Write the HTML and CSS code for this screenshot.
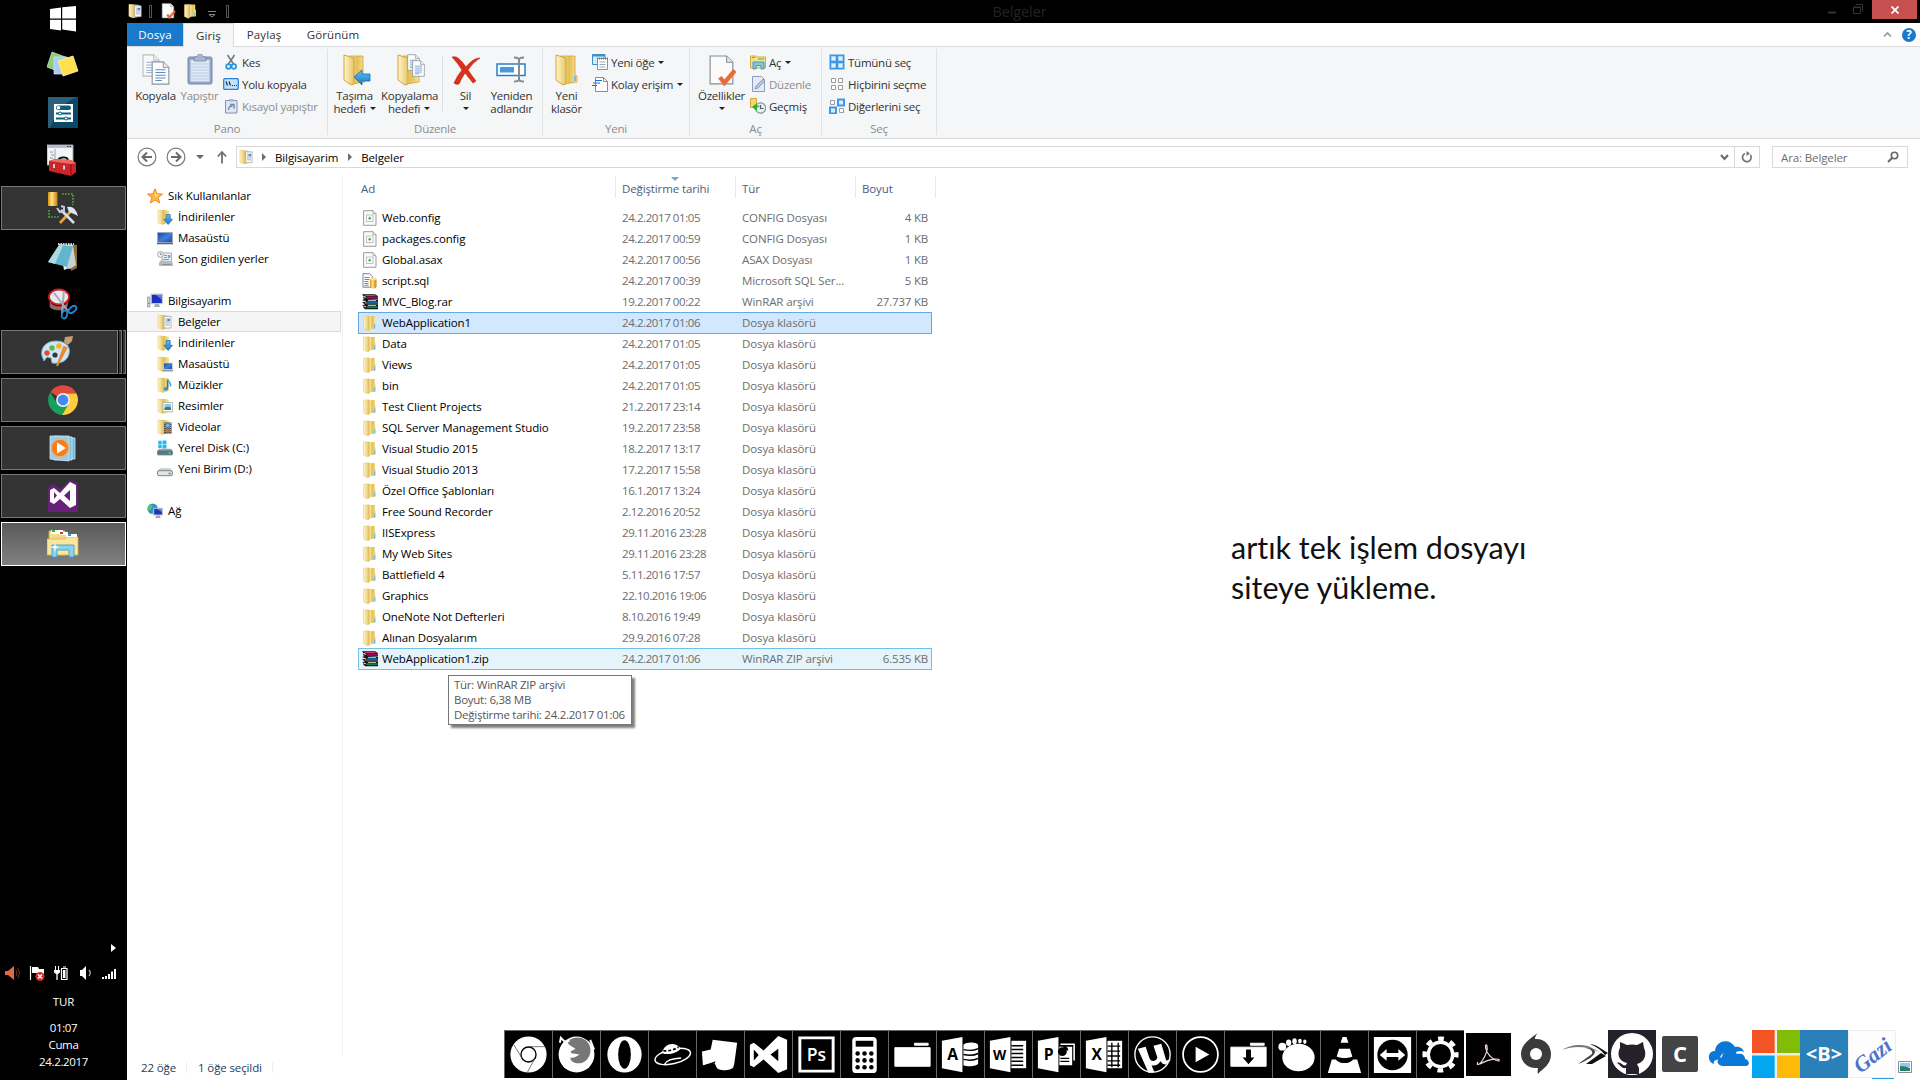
FILE: index.html
```html
<!DOCTYPE html>
<html lang="tr">
<head>
<meta charset="utf-8">
<title>Belgeler</title>
<link rel="stylesheet" href="styles.css">
</head>
<body>
<svg class="defs" aria-hidden="true">
  <defs>
    <linearGradient id="gFold" x1="0" x2="1"><stop offset="0" stop-color="#fdf3bd"/><stop offset=".5" stop-color="#e3bf55"/><stop offset="1" stop-color="#f8e59c"/></linearGradient>
    <linearGradient id="gFront" x1="0" x2="1"><stop offset="0" stop-color="#fff6cd"/><stop offset="1" stop-color="#e6c566"/></linearGradient>
    <linearGradient id="gBlue" x1="0" y1="0" x2="0" y2="1"><stop offset="0" stop-color="#5cc4f5"/><stop offset="1" stop-color="#1679c4"/></linearGradient>
    <linearGradient id="gScreen" x1="0" y1="0" x2="1" y2="1"><stop offset="0" stop-color="#123f9a"/><stop offset=".5" stop-color="#3f7fdc"/><stop offset="1" stop-color="#164aa6"/></linearGradient>
    <linearGradient id="gDb" x1="0" x2="1"><stop offset="0" stop-color="#d8920f"/><stop offset=".4" stop-color="#ffe28a"/><stop offset="1" stop-color="#c67c08"/></linearGradient>
  </defs>
  <symbol id="folder" viewBox="0 0 16 16"><path d="M7 1h6v5l.8 1v6.500L7 14.500z" fill="url(#gFold)"/><path d="M1.5 1.200L7 .8v14.400l-1.600.6-3.900-2z" fill="url(#gFront)" stroke="#e1c369" stroke-width=".5"/><path d="M7 1v14.300" stroke="#d9b85a" stroke-width=".8"/><path d="M12.600 9.500v4" stroke="#5eb7ea" stroke-width="1.100"/></symbol>
  <symbol id="folderback" viewBox="0 0 16 16"><path d="M1 1h6l5 .5V14l-6 1.500-5-2z" fill="url(#gFold)"/><path d="M1 1l5 .3V15.600L1 13.600z" fill="url(#gFront)" stroke="#e1c369" stroke-width=".5"/></symbol>
  <symbol id="docs" viewBox="0 0 16 16"><use href="#folderback"/><path d="M7 2.500h7v11.500H7z" fill="#fafafa" stroke="#a8a8a8" stroke-width=".8"/><path d="M8.300 5h2M8.300 7h2M8.300 9h4.500M8.300 11h4.500" stroke="#9a9a9a" stroke-width=".8"/><rect x="10.300" y="4.600" width="2.600" height="2.800" fill="#2d8fe0"/></symbol>
  <symbol id="downloads" viewBox="0 0 16 16"><use href="#folderback"/><path d="M9.200 5.500h4v4.800h2.300L11.200 15.400 6.900 10.300h2.300z" fill="url(#gBlue)" stroke="#1a62a8" stroke-width=".7"/></symbol>
  <symbol id="deskfolder" viewBox="0 0 16 16"><use href="#folderback"/><rect x="6.500" y="7" width="9" height="6.600" fill="url(#gScreen)" stroke="#d8dde2" stroke-width=".7"/><path d="M6 14.800h10" stroke="#768596" stroke-width="1.200"/></symbol>
  <symbol id="music" viewBox="0 0 16 16"><use href="#folderback"/><path d="M10.600 2.500v8.700" stroke="#1b79c8" stroke-width="1.500"/><path d="M10.600 2.500c.8 2.400 4 3 2.800 7" fill="none" stroke="#3ba4ea" stroke-width="1.500"/><ellipse cx="9" cy="11.800" rx="2.300" ry="1.900" fill="#2f92da"/></symbol>
  <symbol id="pictures" viewBox="0 0 16 16"><use href="#folderback"/><rect x="6" y="4.400" width="9.300" height="9.500" fill="#fff" stroke="#a5a9ad" stroke-width=".8"/><rect x="7.400" y="6" width="6.600" height="6" fill="#88cbed"/><path d="M7.400 10c3-2 4-1 6.600-.5V12H7.400z" fill="#477b6d"/></symbol>
  <symbol id="videos" viewBox="0 0 16 16"><use href="#folderback"/><rect x="7" y="3.500" width="7.600" height="11" fill="#4b545e"/><path d="M8 4v10M13.700 4v10" stroke="#e4e8ec" stroke-width=".8" stroke-dasharray="1 1"/><rect x="9" y="4.500" width="3.700" height="4" fill="#67aee8"/><rect x="9" y="9.500" width="3.700" height="4" fill="#b9793b"/></symbol>
  <symbol id="desktop" viewBox="0 0 16 16"><rect x=".6" y="2.600" width="14.800" height="10" fill="url(#gScreen)" stroke="#9aa6b4" stroke-width=".9"/><path d="M0 13.600h16" stroke="#5c6b7d" stroke-width="1.400"/></symbol>
  <symbol id="recent" viewBox="0 0 16 16"><path d="M5 2h9.500v9.500H5z" fill="#eceff1" stroke="#9b9fa3" stroke-width=".8"/><path d="M7 4.500h3M7 6.500h3M6 8.500h6" stroke="#7ca0c4"/><rect x="10.800" y="4" width="2.500" height="3" fill="#5ea9e0"/><path d="M2 12l1-2.300h10L16 12v3H2z" fill="#b7bbbf"/><path d="M5 13.500h9" stroke="#8b8f93"/><circle cx="3.400" cy="3.400" r="2.900" fill="#f5f7f8" stroke="#8e959b" stroke-width=".8"/><path d="M3.400 1.700v1.900H5" stroke="#666" fill="none" stroke-width=".7"/></symbol>
  <symbol id="star" viewBox="0 0 16 16"><path d="M8 .8l2 5 5.500.3-4.300 3.500 1.500 5.400L8 12l-4.700 3 1.500-5.400L.5 6.100 6 5.800z" fill="#ffb83f" stroke="#e5831a" stroke-width=".9"/><path d="M8 3l1.200 3.500 3.500.3L8 9z" fill="#ffe29a"/></symbol>
  <symbol id="computer" viewBox="0 0 16 16"><rect x="4.200" y="1.200" width="11.200" height="9.400" fill="#1b2ec0" stroke="#c2c6cf" stroke-width="1.200"/><path d="M9 2h6v5z" fill="#5c7df0"/><path d="M8 11h4l1 3H7z" fill="#a9aeb8"/><rect x=".4" y="4" width="2.600" height="10" fill="#c9ced2" stroke="#8b9096" stroke-width=".6"/><path d="M1 10.500h1.300" stroke="#3da54a"/></symbol>
  <symbol id="diskc" viewBox="0 0 16 16"><path d="M1.300.8h3.400v3.600H1.300zM5.500.4h4v4h-4zM1.300 5.100h3.400v3H1.300zM5.500 5.100h4v3.300h-4z" fill="#1bbcf2"/><path d="M2 8.800h12l1.600 2v4.400H.4v-4.400z" fill="#9aa3aa"/><rect x=".6" y="10.800" width="14.800" height="4" rx="1" fill="#4f7b90" stroke="#70777d" stroke-width=".7"/><path d="M11.500 13h2" stroke="#57dc62" stroke-width="1.400"/></symbol>
  <symbol id="diskd" viewBox="0 0 16 16"><path d="M3 7h10l2.600 3v4.500H.4V10z" fill="#d0d2d5"/><rect x=".6" y="9.700" width="14.800" height="5" rx="1.400" fill="#e4e5e8" stroke="#75797e" stroke-width=".9"/><path d="M11.500 12.500h2.200" stroke="#3fa34a" stroke-width="1.500"/></symbol>
  <symbol id="network" viewBox="0 0 16 16"><circle cx="5.600" cy="5.800" r="5.200" fill="#2f8fd5"/><path d="M3 1.600c3 0 3 2 1.600 3.600S2 8 1 7.400 1 3 3 1.600zM6 7c2-1 3 1 2 3.600H5z" fill="#5cc06a"/><rect x="6.700" y="5.300" width="8.700" height="6.700" fill="#1a35be" stroke="#c0c7d0" stroke-width="1"/><path d="M10 6h5v3z" fill="#6487f0"/><path d="M9.500 12.500h3l1.500 2.500h-6z" fill="#a1a7af"/></symbol>
  <symbol id="config" viewBox="0 0 16 16"><path d="M1.600.7h9.400l3 3v11.600H1.600z" fill="#fbfbfb" stroke="#919191" stroke-width=".9"/><path d="M11 .7v3h3" fill="#e5e5e5" stroke="#919191" stroke-width=".7"/><rect x="4.500" y="5" width="6.500" height="6.500" fill="#fff" stroke="#b5b5b5" stroke-width=".8"/><path d="M7.700 6.800v3M6.200 8.300h3" stroke="#35a43e" stroke-width="1.100"/></symbol>
  <symbol id="sql" viewBox="0 0 16 16"><path d="M1 .7h6.500l3 3v10.500H1z" fill="#fff" stroke="#60779b" stroke-width=".9"/><path d="M2.500 4.500h5M2.500 6.500h5M2.500 8.500h4M2.500 10.500h4M2.500 12.300h4" stroke="#62758f" stroke-width=".9"/><rect x="8" y="5" width="6.500" height="10.500" rx="2.500" fill="url(#gDb)"/><ellipse cx="11.200" cy="6" rx="3.200" ry="1.400" fill="#ffe08a"/></symbol>
  <symbol id="rar" viewBox="0 0 16 16"><path d="M0 .3h13l2.800 1.800v3L4 5.400zM3 5.500h13v4.300H4zM3 10.300h13v5H3L1 13z" fill="#111"/><path d="M2 .9h10.500l2.200 1.300H4.500z" fill="#d43a7c"/><path d="M4.500 2.700h10.700v2H4.500z" fill="#9e0c5c"/><path d="M4.800 7.100h10.900v2H4.800z" fill="#1260ae"/><path d="M4.800 12.200h10.900v2H4.800z" fill="#0b7d58"/><path d="M1 3.500l3 1.600-2.600 1 3 1.700-3 .9 3 1.800-3 1 3.200 2" stroke="#111" stroke-width="1.100" fill="none"/><path d="M2 2.300l2 1.200M1.500 7l2.800 1.200M1.500 12l2.800 1" stroke="#f2f2e8" stroke-width=".9"/><path d="M6 6.500h8M6 11.500h8" stroke="#d8e5c0" stroke-width=".8"/></symbol>
  <symbol id="bigfolder" viewBox="0 0 32 32"><path d="M10 2h14v19l2 1v6l-13 2z" fill="url(#gFold)" stroke="#d3a23c" stroke-width=".8"/><path d="M5 1l10 3v26l-3 1-7-5z" fill="url(#gFront)" stroke="#d3a23c" stroke-width="1"/></symbol>
  <symbol id="page" viewBox="0 0 20 26"><path d="M1 1h12l6 6v18H1z" fill="#fcfcfd" stroke="#8e959c" stroke-width="1.200"/><path d="M13 1v6h6" fill="#e6e8ea" stroke="#8e959c"/><path d="M4.500 9.500h11M4.500 12.500h11M4.500 15.500h11M4.500 18.500h11M4.500 21h7" stroke="#5b8bc4" stroke-width="1.100"/></symbol>
  <symbol id="check" viewBox="0 0 26 30"><path d="M1 1h16l6 6v21H1z" fill="#fbfbfc" stroke="#878c92" stroke-width="1.100"/><path d="M17 1v6h6" fill="#e5e6e8" stroke="#878c92"/><path d="M10.500 21.500l4.300 5.500L25 15" stroke="#ea6a35" stroke-width="4.200" fill="none"/></symbol>
</svg>

<div class="screen">
  <aside class="taskbar">
    <div class="start"><svg width="26" height="26" viewBox="0 0 26 26"><path d="M0 3l11-1.500v11H0zM12.200 1.300L26 0v12.500H12.200zM0 13.700h11v10.800L0 23zM12.200 13.700H26V25.500l-13.800-2z" fill="#fff"/></svg></div>
    <div class="task"><svg width="32" height="32" viewBox="0 0 32 32"><path d="M5 4l16 6-5 15L0 19z" fill="#8bcf7c" stroke="#cdeebf" stroke-width=".7"/><path d="M7 9h13v17H7z" fill="#a5cdf5" stroke="#d7e8fb" stroke-width=".7"/><path d="M11 13l15-5 5 15-15 5z" fill="#ffe14f" stroke="#fff2a0" stroke-width=".8"/></svg></div>
    <div class="task"><svg width="30" height="31" viewBox="0 0 30 31"><path d="M0 0h30v31H0z" fill="#0b4766"/><path d="M0 0h30Q10 6 2 31H0z" fill="#2d5f7a"/><path d="M6 7h19v18H6z" fill="#fff"/><rect x="8" y="8.500" width="15" height="4.500" rx="2.200" fill="#0b5d7c"/><circle cx="10.500" cy="10.700" r="1.800" fill="#fff"/><path d="M8 16.500h15M8 21.500h15" stroke="#0b5d7c" stroke-width="1.800"/><circle cx="12" cy="16.500" r="1.500" fill="#fff" stroke="#0b5d7c"/><circle cx="18" cy="21.500" r="1.500" fill="#fff" stroke="#0b5d7c"/></svg></div>
    <div class="task"><svg width="32" height="32" viewBox="0 0 32 32"><path d="M0 1h26v20H0z" fill="#f3f5f7" stroke="#9aa2ab"/><path d="M0 1h26v3H0z" fill="#b4bfcb"/><path d="M20 2.500h1.500M22.500 2.500H24" stroke="#234"/><path d="M8 5v16" stroke="#9aa2ab"/><path d="M3 8h3M4 11h3M3 14h3M4 17h3" stroke="#8a929b"/><path d="M11 17c0-4 9-5 10-1" fill="none" stroke="#111" stroke-width="1.800"/><path d="M2 17l6-2 16 1 5 3v9l-5 4-22-5z" fill="#c9252b"/><path d="M2 17l22 3 5-1-5-3-16-1z" fill="#ee6a65"/><path d="M24 20v12" stroke="#8c0d12"/><path d="M7 20v4M17 21.500v4" stroke="#ddd" stroke-width="1.800"/></svg></div>
    <div class="task open"><svg width="32" height="34" viewBox="0 0 32 34"><rect x="1" y="1" width="9.500" height="14" rx="1" fill="url(#gDb)"/><path d="M15 3h11v11" fill="none" stroke="#4caf42" stroke-width="1.600" stroke-dasharray="1.700 1.300"/><path d="M2 19v7h11" fill="none" stroke="#4caf42" stroke-width="1.600" stroke-dasharray="1.700 1.300"/><path d="M13 32L24 20" stroke="#e9a62e" stroke-width="2.600"/><path d="M14 19l13 13" stroke="#d4dced" stroke-width="2.600"/><path d="M10 17l3 4 4-1 0-4-3-1" fill="none" stroke="#c0cbe0" stroke-width="2"/><path d="M20 16q8-2 11 9l-4-2-5-2z" fill="#dce6f5"/></svg></div>
    <div class="task"><svg width="32" height="32" viewBox="0 0 32 32"><path d="M22 4l8 1v23l-6 3z" fill="#8d6b33"/><path d="M12 4l14 1-4 23-5 2z" fill="#e8eef0"/><path d="M26 5l3 20-6 4-4-1z" fill="#c8d1d3"/><path d="M12 5l14 1-6 21-19-5z" fill="#62b6cb"/><path d="M12 5l4 .500L8 24l-7-2z" fill="#a9dbe3"/><path d="M11 4h16" stroke="#c8d1d6" stroke-width="2.200" stroke-dasharray="1.500 1"/></svg></div>
    <div class="task"><svg width="32" height="32" viewBox="0 0 32 32"><ellipse cx="12" cy="9" rx="10" ry="7.500" fill="#e9e9f1" stroke="#d11e1e" stroke-width="1.800"/><path d="M3 14c3 6 15 6 18 0l-1 5c-3 4-14 4-17 0z" fill="#737880" stroke="#c33" stroke-width=".8"/><path d="M7 5l14 18M17 3l-2 22" stroke="#a3a9b2" stroke-width="2"/><ellipse cx="17.500" cy="26.500" rx="2.600" ry="4" transform="rotate(15 17.500 26.500)" fill="none" stroke="#2487d0" stroke-width="1.800"/><ellipse cx="25.500" cy="21.500" rx="2.600" ry="4.500" transform="rotate(50 25.500 21.500)" fill="none" stroke="#2487d0" stroke-width="1.800"/></svg></div>
    <div class="taskrow"><div class="task open multi"><svg width="32" height="32" viewBox="0 0 32 32"><path d="M1 20C-1 11 6 5 15 5c10 0 15 6 13 13-2 8-10 10-17 9l-1-5-4-1-3 4z" fill="#cfe6f5" stroke="#6fb0d8" stroke-width="1"/><circle cx="14" cy="19" r="2.600" fill="#2d3a45"/><circle cx="6" cy="17" r="2.700" fill="#e2493b"/><circle cx="11" cy="12" r="2.700" fill="#5fba46"/><circle cx="18" cy="10" r="2.800" fill="#f3b32a"/><path d="M16 30l7-19 2.500 1z" stroke="#e7892c" fill="#f4a03b" stroke-width="1.800"/><path d="M24 1l8-1-1 5-4 4-4-3z" fill="#c99e6d"/></svg></div><i class="stack"></i><i class="stack"></i></div>
    <div class="task open"><svg width="30" height="30" viewBox="0 0 30 30"><path d="M15 15L2.500 7A15 15 0 0 1 28.500 8.500H15z" fill="#dd4b3e"/><path d="M15 15l6 3-6.500 12A15 15 0 0 1 2.300 7.200L9 18z" fill="#16a05b"/><path d="M15 8.500h13.500A15 15 0 0 1 14.200 30L21 18z" fill="#ffcd40"/><circle cx="15" cy="15" r="6.900" fill="#f4f4f4"/><circle cx="15" cy="15" r="5.400" fill="#4688f1"/></svg></div>
    <div class="task open"><svg class="media" width="28" height="28" viewBox="0 0 28 28"><path d="M8 3l18 1v21l-18 0z" fill="#73b5d8" stroke="#c4e6f6" stroke-width=".8"/><path d="M5 2l18 1v23L5 26z" fill="#7fbfe0" stroke="#d1edf9" stroke-width=".8"/><path d="M1 2h19v25L1 25z" fill="#9ccbe3" stroke="#cfeaf6" stroke-width=".8"/><circle cx="11" cy="14" r="8.700" fill="#f47f1f" stroke="#fbb06a" stroke-width="1"/><path d="M8 8.500v11l9-5.500z" fill="#fff"/></svg></div>
    <div class="task open"><svg width="30" height="32" viewBox="0 0 30 32"><path d="M0 8l4-4 9 5L22 0l8 3v29H0z" fill="#68217a"/><path d="M22 2l6 3v20l-6 3-10-9-6 5-4-2V10l4-2 6 5zm0 8l-6 5.500 6 5.500zM6 12v7l3-3.500z" fill="#fff"/></svg></div>
    <div class="task open active"><svg width="32" height="32" viewBox="0 0 32 32"><path d="M2 3h16v24H2z" fill="#f3dc83" stroke="#cfae4b" stroke-width=".8"/><path d="M4 2h12v4H4z" fill="#fff"/><path d="M5 3h3" stroke="#2db23a" stroke-width="2"/><path d="M10 6h20v8H10z" fill="#f0d77b"/><path d="M12 4h9v3h-9z" fill="#fff"/><path d="M13 5h3" stroke="#d0402f" stroke-width="2"/><path d="M0 11h18l2-2h11v18H0z" fill="#f8e79d" stroke="#d5b450" stroke-width=".8"/><path d="M19 6h11v3H19z" fill="#fff"/><path d="M21 7h3" stroke="#3499d8" stroke-width="2"/><path d="M5 29V17h22v12h-5v-7H10v7z" fill="#8bd3ee" stroke="#3f9ecb" stroke-width=".9"/><path d="M8 13l.7 5 4.300 1-4.300 1-.7 5-.7-5-4.300-1 4.300-1z" fill="#fff"/></svg></div>

    <div class="tray">
      <svg class="expand" width="5" height="8" viewBox="0 0 5 8"><path d="M0 0l5 4-5 4z" fill="#fff"/></svg>
      <div class="trayicons">
        <svg width="16" height="16" viewBox="0 0 16 16"><path d="M0 6h3l6-5v14l-6-5H0z" fill="#e06a48"/><path d="M11 5q2 3 0 6M13 3q3 5 0 10" fill="none" stroke="#6e2d1d"/></svg>
        <svg width="16" height="16" viewBox="0 0 16 16"><path d="M1.500 1v14" stroke="#fff" stroke-width="1.200"/><path d="M3 2h6l1 2h5v5H9L8 8H3z" fill="#fff"/><circle cx="11" cy="11.500" r="4.500" fill="#d32c24"/><path d="M9 9.500l4 4M13 9.500l-4 4" stroke="#fff" stroke-width="1.500"/></svg>
        <svg width="16" height="16" viewBox="0 0 16 16"><path d="M2.500 1v4M5.500 1v4" stroke="#fff"/><path d="M1 5h6v2.500L5 9H3L1 7.500z" fill="#fff"/><path d="M4 8.500V15" stroke="#fff" stroke-width="1.300"/><path d="M8.500 3.500h5.500v11H8.500zM10 2h3" fill="none" stroke="#fff" stroke-width="1.200"/><path d="M10 5h2.500v8H10z" fill="#fff"/></svg>
        <svg width="16" height="16" viewBox="0 0 16 16"><path d="M3 5h2l4-4v14l-4-4H3z" fill="#fff"/><path d="M12 5q2.500 3 0 6" fill="none" stroke="#bbb" stroke-width="1.200"/></svg>
        <svg width="16" height="16" viewBox="0 0 16 16"><path d="M1 12h2v2H1zM4 11h2v3H4zM7 9h2v5H7zM10 6.500h2V14h-2zM13 4h2v10h-2z" fill="#fff"/></svg>
      </div>
      <div class="lang">TUR</div>
      <div class="clock">01:07<br>Cuma<br>24.2.2017</div>
    </div>
  </aside>

  <main class="window">
    <header class="titlebar">
      <div class="quick">
        <svg width="15" height="16"><use href="#docs"/></svg><i class="grip"></i>
        <svg class="q2" width="15" height="16"><use href="#check"/></svg>
        <svg class="q3" width="15" height="16"><use href="#folder"/></svg>
        <svg class="q4" width="8" height="7" viewBox="0 0 8 7"><path d="M0 .500h8M1 3.500h6L4 6z" stroke="#888" fill="none"/></svg><i class="grip"></i>
      </div>
      <div class="title">Belgeler</div>
      <div class="winbtns">
        <svg width="8" height="10" viewBox="0 0 8 10"><path d="M0 8.500h8" stroke="#333" stroke-width="2"/></svg>
        <svg width="10" height="10" viewBox="0 0 10 10"><path d="M.500 3.500h7v6h-7zM0 3h8M2.500.500h7v7" fill="none" stroke="#333"/></svg>
        <span class="close"><svg width="8" height="8" viewBox="0 0 8 8"><path d="M.500.500l7 7M7.500.500l-7 7" stroke="#fff" stroke-width="1.700"/></svg></span>
      </div>
    </header>
    <nav class="tabs">
      <span class="tab file">Dosya</span><span class="tab current">Giriş</span><span class="tab share">Paylaş</span><span class="tab view">Görünüm</span>
      <svg class="caret" width="9" height="7" viewBox="0 0 9 7"><path d="M1 5.500L4.500 2 8 5.500" fill="none" stroke="#999" stroke-width="1.700"/></svg>
      <span class="help">?</span>
    </nav>
    <section class="ribbon">
      <div class="group g1">
        <div class="tools">
          <div class="big w40"><svg width="32" height="32" viewBox="0 0 32 32"><use href="#page" x="2" y="0" width="18" height="23" opacity=".6"/><use href="#page" x="11" y="7" width="19" height="24"/></svg>Kopyala</div>
          <div class="big w46 off"><svg width="32" height="32" viewBox="0 0 32 32"><rect x="4" y="3" width="24" height="27" rx="1.500" fill="#93a3c4" stroke="#7488b2"/><path d="M6.500 6h19v21.500h-19z" fill="#dfe8f7"/><path d="M7 10h18M7 13h18M7 16h18M7 19h18M7 22h18M7 25h18" stroke="#bccce6"/><path d="M10 7V3h3c0-4 6-4 6 0h3v4z" fill="#aab7cf" stroke="#7488b2" stroke-width=".8"/></svg>Yapıştır</div>
          <div class="smalls">
            <span><svg width="16" height="16" viewBox="0 0 16 16"><path d="M4.500 1l6 9M11.500 1l-6 9" stroke="#6d7682" stroke-width="1.500"/><circle cx="5.500" cy="12.500" r="2.300" fill="none" stroke="#2695dd" stroke-width="1.700"/><circle cx="10.800" cy="12.500" r="2.300" fill="none" stroke="#2695dd" stroke-width="1.700"/></svg>Kes</span>
            <span><svg width="16" height="16" viewBox="0 0 16 16"><rect x=".700" y="2.700" width="14.600" height="10.600" rx="1" fill="#c6e2fb" stroke="#2b7fdc" stroke-width="1.300"/><path d="M3 5.500l1.500 4M6 5.500l1.500 4M9 9.500h1M11 9.500h1M13 9.500h1" stroke="#1c2b45" stroke-width="1.200"/></svg>Yolu kopyala</span>
            <span class="off"><svg width="16" height="16" viewBox="0 0 16 16"><path d="M2.500 2.500h11.500v12.500H2.500z" fill="#dfe6f1" stroke="#8292b3"/><path d="M6 1h4.500v2.500H6z" fill="#a8b4cb"/><path d="M5.500 12c0-3 1-4 4-4M7 6.500h4v4" fill="none" stroke="#7386ae" stroke-width="1.400"/></svg>Kısayol yapıştır</span>
          </div>
        </div><div class="label">Pano</div>
      </div>
      <div class="group g2">
        <div class="tools">
          <div class="big w52"><svg width="32" height="32" viewBox="0 0 32 32"><use href="#bigfolder"/><path d="M15 23l8-7v4h8v7h-8v4z" fill="url(#gBlue)" stroke="#1669b1" stroke-width=".8"/></svg>Taşıma<br>hedefi <b class="dd"></b></div>
          <div class="big w56"><svg width="32" height="32" viewBox="0 0 32 32"><use href="#bigfolder"/><use href="#page" x="14" y="0" width="13" height="17"/><use href="#page" x="19" y="6" width="13" height="17"/></svg>Kopyalama<br>hedefi <b class="dd"></b></div>
          <i class="subsep"></i>
          <div class="big del"><svg width="32" height="32" viewBox="0 0 32 32"><path d="M2 3q3-1 6 1 4 3 8 9 7-9 14-9-7 4-12 12 4 6 8 11l-3 2q-4-5-8-10-4 6-6 11-3 1-5-1 3-7 8-13Q7 8 2 3z" fill="#dc3018" stroke="#b3200e" stroke-width=".6"/></svg>Sil<br><b class="dd"></b></div>
          <div class="big w46"><svg width="32" height="32" viewBox="0 0 32 32"><rect x="1" y="10" width="28" height="11.500" fill="#fff" stroke="#277fca" stroke-width="1.500"/><rect x="4" y="13" width="14" height="5.500" fill="#4a98dd"/><path d="M18 3.500q5 0 5 2.500v19q0 2.500-5 2.500M28 3.500q-5 0-5 2.500v19q0 2.500 5 2.500" fill="none" stroke="#868b90" stroke-width="2"/></svg>Yeniden<br>adlandır</div>
        </div><div class="label">Düzenle</div>
      </div>
      <div class="group g3">
        <div class="tools">
          <div class="big w46"><svg width="32" height="32" viewBox="0 0 32 32"><use href="#bigfolder"/><path d="M24 22v5" stroke="#6ec2f2" stroke-width="2"/></svg>Yeni<br>klasör</div>
          <div class="smalls">
            <span><svg width="16" height="16" viewBox="0 0 16 16"><path d="M.500.500h12.500v10H.500z" fill="#d7ecfa" stroke="#3c8ecb"/><path d="M.500 1.500h12.500" stroke="#3c8ecb" stroke-width="2"/><path d="M5.500 4.500h10v11h-10z" fill="#fff" stroke="#8b9097"/><path d="M5 4.500h11" stroke="#777" stroke-width="2" stroke-dasharray="1 1"/><path d="M7.500 8h6M7.500 10.500h6M7.500 13h6" stroke="#a3a8ae"/></svg>Yeni öğe <b class="dd"></b></span>
            <span><svg width="16" height="16" viewBox="0 0 16 16"><path d="M3.500 1.500h8l4 4v10h-12z" fill="#fff" stroke="#878c92"/><path d="M11.500 1.500v4h4" fill="none" stroke="#878c92"/><path d="M3 4.500h7M1 7h7M0 9.500h5" stroke="#1c6fd0" stroke-width="1.200"/></svg>Kolay erişim <b class="dd"></b></span>
          </div>
        </div><div class="label">Yeni</div>
      </div>
      <div class="group g4">
        <div class="tools">
          <div class="big w54"><svg width="32" height="32" viewBox="0 0 32 32"><use href="#check" x="3" y="1" width="27" height="31"/></svg>Özellikler<br><b class="dd"></b></div>
          <div class="smalls">
            <span><svg width="16" height="16" viewBox="0 0 16 16"><path d="M.500 2h6l1 1h8v11H.500z" fill="#f6e08c" stroke="#d0ab44"/><path d="M2 3.500h3M8 5h6" stroke="#5fb04a"/><path d="M3 15V8h11v7h-3v-3.500H6V15z" fill="#7ccbea" stroke="#3387b4" stroke-width=".8"/></svg>Aç <b class="dd"></b></span>
            <span class="off"><svg width="16" height="16" viewBox="0 0 16 16"><path d="M2.500.500h9l3 3v12h-12z" fill="#e4ebf6" stroke="#8d9dbd"/><path d="M5 13l1-3 7-7 2 2-7 7z" fill="#b4c3de" stroke="#8192b5" stroke-width=".8"/></svg>Düzenle</span>
            <span><svg width="16" height="16" viewBox="0 0 16 16"><path d="M.500.500h6v9h-6z" fill="#f3d66f" stroke="#d2aa3f"/><circle cx="10.500" cy="10" r="5.200" fill="#e8eef3" stroke="#8b97a3" stroke-width="1.200"/><path d="M10.500 7v3.500h3" fill="none" stroke="#56616c" stroke-width="1.200"/><path d="M2 9l5-4v2.500c3 0 3 1 3 1-3 0-3 1-3 4.500z" fill="#2fb12b"/></svg>Geçmiş</span>
          </div>
        </div><div class="label">Aç</div>
      </div>
      <div class="group g5">
        <div class="tools">
          <div class="smalls">
            <span><svg width="16" height="16" viewBox="0 0 16 16"><path d="M.500.500h15v15H.500z" fill="#3d96e6"/><path d="M2.500 2.500h4v4h-4zM9.500 2.500h4v4h-4zM2.500 9.500h4v4h-4zM9.500 9.500h4v4h-4z" fill="#e2f1fe" stroke="#a6d2f9"/></svg>Tümünü seç</span>
            <span><svg width="16" height="16" viewBox="0 0 16 16"><path d="M2.500 2.500h4v4h-4zM9.500 2.500h4v4h-4zM2.500 9.500h4v4h-4zM9.500 9.500h4v4h-4z" fill="#fff" stroke="#9a9a9a"/></svg>Hiçbirini seçme</span>
            <span><svg width="16" height="16" viewBox="0 0 16 16"><path d="M1.500 2.500h4v4h-4zM10.500 10.500h4v4h-4z" fill="#fff" stroke="#9a9a9a"/><path d="M9 1.500h6v6H9zM1 9.500h6v6H1z" fill="#d8ecfd" stroke="#3d96e6" stroke-width="2"/></svg>Diğerlerini seç</span>
          </div>
        </div><div class="label">Seç</div>
      </div>
    </section>
    <section class="address">
      <svg width="20" height="20" viewBox="0 0 20 20"><circle cx="10" cy="10" r="8.900" fill="#fff" stroke="#7b7b7b" stroke-width="1.200"/><path d="M15 10H6M10 5.500L5.500 10l4.500 4.500" fill="none" stroke="#6a6a6a" stroke-width="2"/></svg>
      <svg class="fwd" width="20" height="20" viewBox="0 0 20 20"><circle cx="10" cy="10" r="8.900" fill="#fff" stroke="#7b7b7b" stroke-width="1.200"/><path d="M5 10h9M10 5.500l4.500 4.500-4.500 4.500" fill="none" stroke="#6a6a6a" stroke-width="2"/></svg>
      <b class="dd hist"></b>
      <svg class="up" width="10" height="14" viewBox="0 0 10 14"><path d="M5 13.500V2M.800 6.500L5 2l4.200 4.500" fill="none" stroke="#6f6f6f" stroke-width="1.800"/></svg>
      <div class="crumbs"><svg width="15" height="16"><use href="#docs"/></svg><i class="arr"></i><span>Bilgisayarim</span><i class="arr a2"></i><span>Belgeler</span>
        <svg class="chev" width="9" height="7" viewBox="0 0 9 7"><path d="M1 1l3.500 4L8 1" fill="none" stroke="#666" stroke-width="2"/></svg>
        <span class="refresh"><svg width="12" height="12" viewBox="0 0 12 12"><path d="M4 2.500a4.300 4.300 0 1 0 5.300 1.300" fill="none" stroke="#757575" stroke-width="1.700"/><path d="M5.500 0v5l3.500-2.500z" fill="#757575"/></svg></span>
      </div>
      <div class="search"><span>Ara: Belgeler</span><svg width="12" height="12" viewBox="0 0 12 12"><circle cx="7.500" cy="4.500" r="3.200" fill="none" stroke="#666" stroke-width="1.600"/><path d="M5 7L1 11" stroke="#666" stroke-width="2"/></svg></div>
    </section>

    <section class="content">
      <div class="tree">
        <div class="node root"><svg><use href="#star"/></svg>Sık Kullanılanlar</div>
        <div class="node"><svg><use href="#downloads"/></svg>İndirilenler</div>
        <div class="node"><svg><use href="#desktop"/></svg>Masaüstü</div>
        <div class="node"><svg><use href="#recent"/></svg>Son gidilen yerler</div>
        <div class="node root gap"><svg><use href="#computer"/></svg>Bilgisayarim</div>
        <div class="node sel"><svg><use href="#docs"/></svg>Belgeler</div>
        <div class="node"><svg><use href="#downloads"/></svg>İndirilenler</div>
        <div class="node"><svg><use href="#deskfolder"/></svg>Masaüstü</div>
        <div class="node"><svg><use href="#music"/></svg>Müzikler</div>
        <div class="node"><svg><use href="#pictures"/></svg>Resimler</div>
        <div class="node"><svg><use href="#videos"/></svg>Videolar</div>
        <div class="node"><svg><use href="#diskc"/></svg>Yerel Disk (C:)</div>
        <div class="node"><svg><use href="#diskd"/></svg>Yeni Birim (D:)</div>
        <div class="node root gap"><svg><use href="#network"/></svg>Ağ</div>
      </div>
      <div class="files">
        <div class="head"><span>Ad</span><span class="sorted">Değiştirme tarihi</span><span>Tür</span><span>Boyut</span></div>
        <div class="row"><svg><use href="#config"/></svg><b>Web.config</b><time>24.2.2017 01:05</time><span>CONFIG Dosyası</span><em>4 KB</em></div>
        <div class="row"><svg><use href="#config"/></svg><b>packages.config</b><time>24.2.2017 00:59</time><span>CONFIG Dosyası</span><em>1 KB</em></div>
        <div class="row"><svg><use href="#config"/></svg><b>Global.asax</b><time>24.2.2017 00:56</time><span>ASAX Dosyası</span><em>1 KB</em></div>
        <div class="row"><svg><use href="#sql"/></svg><b>script.sql</b><time>24.2.2017 00:39</time><span>Microsoft SQL Ser...</span><em>5 KB</em></div>
        <div class="row"><svg><use href="#rar"/></svg><b>MVC_Blog.rar</b><time>19.2.2017 00:22</time><span>WinRAR arşivi</span><em>27.737 KB</em></div>
        <div class="row selected"><svg><use href="#folder"/></svg><b>WebApplication1</b><time>24.2.2017 01:06</time><span>Dosya klasörü</span><em></em></div>
        <div class="row"><svg><use href="#folder"/></svg><b>Data</b><time>24.2.2017 01:05</time><span>Dosya klasörü</span><em></em></div>
        <div class="row"><svg><use href="#folder"/></svg><b>Views</b><time>24.2.2017 01:05</time><span>Dosya klasörü</span><em></em></div>
        <div class="row"><svg><use href="#folder"/></svg><b>bin</b><time>24.2.2017 01:05</time><span>Dosya klasörü</span><em></em></div>
        <div class="row"><svg><use href="#folder"/></svg><b>Test Client Projects</b><time>21.2.2017 23:14</time><span>Dosya klasörü</span><em></em></div>
        <div class="row"><svg><use href="#folder"/></svg><b>SQL Server Management Studio</b><time>19.2.2017 23:58</time><span>Dosya klasörü</span><em></em></div>
        <div class="row"><svg><use href="#folder"/></svg><b>Visual Studio 2015</b><time>18.2.2017 13:17</time><span>Dosya klasörü</span><em></em></div>
        <div class="row"><svg><use href="#folder"/></svg><b>Visual Studio 2013</b><time>17.2.2017 15:58</time><span>Dosya klasörü</span><em></em></div>
        <div class="row"><svg><use href="#folder"/></svg><b>Özel Office Şablonları</b><time>16.1.2017 13:24</time><span>Dosya klasörü</span><em></em></div>
        <div class="row"><svg><use href="#folder"/></svg><b>Free Sound Recorder</b><time>2.12.2016 20:52</time><span>Dosya klasörü</span><em></em></div>
        <div class="row"><svg><use href="#folder"/></svg><b>IISExpress</b><time>29.11.2016 23:28</time><span>Dosya klasörü</span><em></em></div>
        <div class="row"><svg><use href="#folder"/></svg><b>My Web Sites</b><time>29.11.2016 23:28</time><span>Dosya klasörü</span><em></em></div>
        <div class="row"><svg><use href="#folder"/></svg><b>Battlefield 4</b><time>5.11.2016 17:57</time><span>Dosya klasörü</span><em></em></div>
        <div class="row"><svg><use href="#folder"/></svg><b>Graphics</b><time>22.10.2016 19:06</time><span>Dosya klasörü</span><em></em></div>
        <div class="row"><svg><use href="#folder"/></svg><b>OneNote Not Defterleri</b><time>8.10.2016 19:49</time><span>Dosya klasörü</span><em></em></div>
        <div class="row"><svg><use href="#folder"/></svg><b>Alınan Dosyalarım</b><time>29.9.2016 07:28</time><span>Dosya klasörü</span><em></em></div>
        <div class="row hover"><svg><use href="#rar"/></svg><b>WebApplication1.zip</b><time>24.2.2017 01:06</time><span>WinRAR ZIP arşivi</span><em>6.535 KB</em></div>
      </div>
    </section>
    <footer class="status"><span>22 öğe</span><span>1 öğe seçildi</span></footer>
  </main>

  <div class="tooltip">Tür: WinRAR ZIP arşivi<br>Boyut: 6,38 MB<br>Değiştirme tarihi: 24.2.2017 01:06</div>
  <div class="note">artık tek işlem dosyayı<br>siteye yükleme.</div>

  <div class="dock">
    <svg class="tile" viewBox="0 0 48 48"><circle cx="24" cy="24" r="18.500" fill="#fff"/><circle cx="24" cy="24" r="7.700" fill="#fff" stroke="#000" stroke-width="1.400"/><path d="M24 16h17M17.500 28L9 14M30.500 28L23 42" stroke="#555" stroke-width=".8"/></svg>
    <svg class="tile" viewBox="0 0 48 48"><circle cx="24" cy="24" r="18.300" fill="#fff"/><path d="M17 9c8-5 17-2 20 5 4 9-2 19-11 19-6 0-9-4-8-6 3 1 6-1 9-3-4-1-9 0-9-3l5-3-5-3c-3-2-4-4-1-6z" fill="#777"/><path d="M7 12l1-5 4 4 5-1M38 9l4 10" stroke="#fff" stroke-width="2" fill="none"/></svg>
    <svg class="tile" viewBox="0 0 48 48"><ellipse cx="24" cy="24" rx="17.500" ry="18.500" fill="#fff"/><ellipse cx="24" cy="24" rx="6.500" ry="14.500" fill="#000"/></svg>
    <svg class="tile" viewBox="0 0 48 48"><g transform="rotate(-13 24 25)"><ellipse cx="24" cy="26" rx="18.500" ry="7.500" fill="#000" stroke="#fff" stroke-width="1.500"/><path d="M14 20c5-9 15-9 20 0-5 4-15 4-20 0z" fill="#fff"/><path d="M16 18q8 3 16 0" fill="none" stroke="#000" stroke-width="1.800" stroke-dasharray="3 2"/><path d="M14 32q4-5 18-2.500" fill="none" stroke="#fff" stroke-width="1.300"/></g></svg>
    <svg class="tile" viewBox="0 0 48 48"><path d="M16 9l25 3-3 22-1 3c-2 4-16 4-17 0l-2-4-12 2-1-14 9-2z" fill="#fff"/><path d="M7 35l12-4-1 2-9 3z" fill="#000"/></svg>
    <svg class="tile" viewBox="0 0 48 48"><path d="M34 5l9 4v30l-9 4-15-14-10 8-4-2V14l4-2 10 8zm0 13l-8 6 8 7zM9 19v11l5-5.500z" fill="#fff"/></svg>
    <svg class="tile" viewBox="0 0 48 48"><path d="M7 7h34v34H7z" fill="none" stroke="#fff" stroke-width="3"/><text x="24" y="31" class="t ps">Ps</text></svg>
    <svg class="tile" viewBox="0 0 48 48"><rect x="11.500" y="6" width="25" height="37" rx="4" fill="#fff"/><path d="M15 10h18v6H15z"/><g><circle cx="17" cy="23" r="2.300"/><circle cx="24" cy="23" r="2.300"/><circle cx="31" cy="23" r="2.300"/><circle cx="17" cy="30" r="2.300"/><circle cx="24" cy="30" r="2.300"/><circle cx="31" cy="30" r="2.300"/><circle cx="17" cy="37" r="2.300"/><circle cx="24" cy="37" r="2.300"/><circle cx="31" cy="37" r="2.300"/></g></svg>
    <svg class="tile" viewBox="0 0 48 48"><path d="M6 17h36v19H6zM26 12.500h14v2H26z" fill="#fff" stroke="#fff"/></svg>
    <svg class="tile" viewBox="0 0 48 48"><path d="M5 10l21-4v36L5 38z" fill="#fff"/><path d="M27 14c3-3 15-3 15 1v18c0 3-11 4-15 2z" fill="#fff"/><path d="M27 19q9 2 15-1M27 24q9 2 15-1M27 29q9 2 15-1" stroke="#000" fill="none" stroke-width="1.500"/><text x="16" y="30" class="t">A</text></svg>
    <svg class="tile" viewBox="0 0 48 48"><path d="M5 10l21-4v36L5 38z" fill="#fff"/><path d="M27 10h15v28H27z" fill="#fff"/><path d="M27 15h12M27 19h12M27 23h12M27 27h12M27 31h12M27 35h12" stroke="#000" stroke-width="1.500"/><text x="15" y="30" class="t w">W</text></svg>
    <svg class="tile" viewBox="0 0 48 48"><path d="M5 10l21-4v36L5 38z" fill="#fff"/><path d="M27 17h12v17H27" fill="#fff" stroke="#fff" stroke-width="2"/><path d="M28 13.500h14V30" fill="none" stroke="#fff" stroke-width="1.600"/><circle cx="30" cy="21" r="4.500"/><path d="M31 20v-5a5 5 0 0 1 5 5z" fill="#000"/><path d="M28 28h9M28 31h9" stroke="#000" stroke-width="1.400"/><text x="16" y="30" class="t">P</text></svg>
    <svg class="tile" viewBox="0 0 48 48"><path d="M5 10l21-4v36L5 38z" fill="#fff"/><path d="M27 10h15v28H27z" fill="#fff"/><path d="M27 15.500h13M27 20.500h13M27 25.500h13M27 30.500h13M27 35h13M31.500 12v25M38 12v25" stroke="#000" stroke-width="1.400"/><text x="16" y="30" class="t">X</text></svg>
    <svg class="tile" viewBox="0 0 48 48"><circle cx="24" cy="24" r="18" fill="none" stroke="#fff" stroke-width="1.400"/><path d="M9 18l8-2 4 12c2 4 7 3 8-1l-4-12 8-2 5 17 5-1-5 5c-3 1-5-2-6-3-2 4-6 5-9 4l3 7-6 1z" fill="#fff"/></svg>
    <svg class="tile" viewBox="0 0 48 48"><circle cx="24" cy="24" r="17.800" fill="none" stroke="#fff" stroke-width="1.800"/><path d="M19 16v16l14-8z" fill="#fff"/></svg>
    <svg class="tile" viewBox="0 0 48 48"><path d="M6 16.500h36v19.500H6zM26 12.500h14v2H26z" fill="#fff" stroke="#fff"/><path d="M21.500 19h5v8h3.500l-6 7-6-7h3.500z"/></svg>
    <svg class="tile" viewBox="0 0 48 48"><ellipse cx="26" cy="27" rx="16.500" ry="14" fill="#fff"/><g fill="#fff"><circle cx="9.500" cy="16" r="4"/><ellipse cx="16" cy="12" rx="2.700" ry="3.400"/><ellipse cx="22" cy="10.500" rx="2.300" ry="3"/><ellipse cx="27.500" cy="10.300" rx="1.900" ry="2.500"/><ellipse cx="32.500" cy="11" rx="1.700" ry="2.200"/></g></svg>
    <svg class="tile" viewBox="0 0 48 48"><path d="M22 6h4l2 6h-8zM18.500 18h11l2.500 8c-4 2-12 2-16 0zM11 29h4c4 5 14 5 18 0h4l4 14H7z" fill="#fff"/></svg>
    <svg class="tile" viewBox="0 0 48 48"><path d="M5 6h38v37H5z" fill="#fff"/><circle cx="24" cy="24.500" r="15.500"/><path d="M11 24.500l7-6v4h12v-4l7 6-7 6v-4H18v4z" fill="#fff"/></svg>
    <svg class="tile" viewBox="0 0 48 48"><circle cx="24" cy="24" r="12.500" fill="none" stroke="#fff" stroke-width="3.500"/><circle cx="24" cy="24" r="16.200" fill="none" stroke="#fff" stroke-width="4.500" stroke-dasharray="6 6.723" stroke-dashoffset="3"/></svg>
    <svg class="acro" viewBox="0 0 48 48"><path d="M2 3h45v43H2z"/><path d="M14 32c-2 3 1 4 4-1 4-6 6-11 5-15-1-3-3 0 0 6 3 5 8 9 12 9 2-3-8-3-19 3" fill="none" stroke="#f2d9d9" stroke-width="1.200"/></svg>
    <svg viewBox="0 0 48 48"><path d="M26 3c-3 3-3 5-3 6 9-1 16 6 16 15 0 11-8 14-13 20-1-3 0-4 0-6-9 1-17-5-17-14S17 9 26 3z" fill="#3b3b3b"/><circle cx="24" cy="24" r="6" fill="#fff"/></svg>
    <svg viewBox="0 0 48 48"><path d="M2 20c8-5 16-6 26-4l12 6-12-4c-9-2-18-1-26 2z" fill="#777"/><path d="M19 18c8-1 15 2 13 6l-14 10c9-3 18-9 17-13-2-3-8-4-16-3z" fill="#444"/><path d="M30 14c8 1 11 5 18 9l-3 2c-4-5-8-8-15-11zM41 23L26 34h6l14-8z" fill="#111"/></svg>
    <svg viewBox="0 0 48 48"><path d="M0 0h48v48H0z" fill="#25202a"/><circle cx="24" cy="24" r="21" fill="#fff"/><path d="M12 12l7 3q5-1 10 0l6-3 1 6c3 6 1 14-7 16l2 4v6H18v-6c-5 1-6-4-9-5 4-2 6 4 9 2l1-2C10 31 9 23 12 18z" fill="#25202a"/></svg>
    <svg viewBox="0 0 48 48"><rect x="6" y="6" width="36" height="36" rx="2" fill="#444"/><text x="24" y="32" class="t c">C</text></svg>
    <svg viewBox="0 0 48 48"><path d="M10 34c-7-2-7-13 1-13 1-11 15-13 20-4 5-1 8 2 9 5-3-2-7-1-9 1-7-4-15 0-15 6-5 1-7 2-6 5z" fill="#0b78d7"/><path d="M18 36c-6-1-6-8 0-9 1-8 11-10 15-3 5-1 8 1 8 5 5 1 5 7 1 7z" fill="#0b78d7"/></svg>
    <svg viewBox="0 0 48 48"><path d="M0 0h48v48H0z" fill="#eee"/><path d="M0 0h22.700v23H0z" fill="#f35325"/><path d="M25 0h23v23H25z" fill="#81bc06"/><path d="M0 25.500h22.700V48H0z" fill="#05a6f0"/><path d="M25 25.500h23V48H25z" fill="#ffba08"/></svg>
    <svg viewBox="0 0 48 48"><path d="M0 0h48v48H0z" fill="#2a80b9"/><text x="24" y="31" class="t b">&lt;B&gt;</text></svg>
    <svg class="site" viewBox="0 0 48 48"><path d="M.500.500h47v47H.500z" fill="#fdfdfd" stroke="#eee"/><path d="M24 48.500h22" stroke="#2aa0dc" stroke-width="1"/><text x="24" y="33" class="t gazi" transform="rotate(-38 24 25)">Gazi</text></svg>
    <svg class="mini" viewBox="0 0 14 12"><path d="M.500.500h13v11H.500z" fill="#fff" stroke="#888f99"/><path d="M2 2h10v4H2z" fill="#8dccec"/><path d="M2 5q5 0 10 2v3H2z" fill="#2d7c68"/></svg>
  </div>
</div>
</body>
</html>
```
FILE: styles.css
```css
* { box-sizing: border-box; }
html, body { margin: 0; background: #000; }
body { font: 11.5px/15px "Open Sans", "Noto Sans", sans-serif; letter-spacing: -.12px; color: #000; overflow: hidden; }
svg { display: block; flex: none; }
.defs { position: absolute; width: 0; height: 0; }
.screen { position: relative; display: flex; width: 1920px; height: 1080px; }

.taskbar { width: 127px; flex: none; display: flex; flex-direction: column; gap: 4px; padding-left: 1px; color: #fff; background: #000; }
.start { height: 38px; width: 125px; display: flex; justify-content: center; align-items: center; padding-right: 1px; }
.task { height: 44px; width: 125px; display: flex; justify-content: center; align-items: center; }
.task svg { margin-left: -1px; }
.open { background: #333; border: 1px solid #777; }
.active { background: linear-gradient(#5a5a5a, #818181); border-color: #fff; }
.taskrow { display: flex; width: 125px; gap: 1px; }
.multi { width: 117px; }
.multi svg { margin-left: -6px; }
.stack { width: 3px; height: 44px; background: #333; border: 1px solid #777; border-left: 0; }
.tray { margin-top: auto; height: 138px; width: 125px; display: flex; flex-direction: column; align-items: center; }
.expand { margin: 2px 10px 0 auto; }
.trayicons { display: flex; gap: 8px; margin: 13px 0 0 -5px; }
.lang { margin-top: 13px; }
.clock { margin-top: 10px; text-align: center; line-height: 17px; letter-spacing: -.35px; }

.window { flex: 1; min-width: 0; display: flex; flex-direction: column; background: #fff; }
.titlebar { height: 23px; background: #000; display: grid; grid-template-columns: 1fr auto 1fr; }
.quick { display: flex; align-items: center; padding: 0 0 1px 1px; }
.grip { width: 3px; height: 13px; border: 1px solid #555; margin-left: 6px; }
.q2 { margin-left: 9px; }
.q3 { margin-left: 7px; }
.q4 { margin: 6px 4px 0 10px; }
.title { font-size: 14.5px; line-height: 23px; color: #232323; margin-right: 8px; }
.winbtns { display: flex; justify-content: flex-end; padding: 4px 3px 0 0; }
.winbtns > svg { margin-right: 17px; }
.winbtns > svg + svg { margin-right: 9px; }
.close { width: 45px; height: 19px; margin-top: -4px; background: #c75050; display: flex; align-items: center; justify-content: center; }
.tabs { height: 24px; display: flex; align-items: center; border-bottom: 1px solid #dadbdc; color: #333; letter-spacing: .1px; }
.tab { height: 24px; line-height: 24px; text-align: center; }
.file { width: 56px; height: 23px; background: #1979ca; color: #fff; align-self: flex-start; }
.current { width: 51px; background: #f5f6f7; border: 1px solid #dadbdc; border-bottom: 0; }
.share { width: 60px; }
.view { width: 78px; }
.caret { margin: 0 10px 0 auto; }
.help { width: 14px; height: 14px; margin-right: 4px; border-radius: 50%; background: #1979ca; color: #fff; font-weight: 700; line-height: 14px; text-align: center; }

.ribbon { height: 92px; background: #f5f6f7; border-bottom: 1px solid #dadbdc; display: flex; padding: 2px 0 3px; color: #333; letter-spacing: -.25px; }
.group { border-right: 1px solid #e0e1e3; display: flex; flex-direction: column; justify-content: space-between; }
.g1 { width: 201px; padding-left: 8px; }
.g2 { width: 215px; }
.g3 { width: 147px; }
.g4 { width: 132px; padding-left: 3px; }
.g5 { width: 115px; padding-left: 7px; }
.label { color: #8c8c8c; text-align: center; height: 14px; line-height: 15px; }
.g1 .label { margin-left: -8px; }
.g4 .label { margin-left: -3px; }
.g5 .label { margin-left: -7px; }
.tools { display: flex; padding-top: 2px; }
.big { text-align: center; line-height: 13px; padding-top: 3px; white-space: nowrap; }
.big svg { margin: 0 auto 3px; }
.off { color: #8d8d8d; }
.w40 { width: 41px; }
.w46 { width: 47px; }
.w52 { width: 53px; }
.w54 { width: 57px; }
.w56 { width: 56px; }
.del { width: 45px; }
.subsep { width: 1px; height: 55px; margin: 5px 0 0 5px; background: #dcdddf; }
.smalls { display: flex; flex-direction: column; }
.g3 .smalls { margin-left: 2px; }
.smalls span { display: flex; align-items: center; gap: 3px; height: 22px; white-space: nowrap; }
.dd { display: inline-block; border: 3px solid transparent; border-top-color: #222; border-bottom: 0; vertical-align: 3px; margin-left: 1px; }

.address { height: 37px; display: flex; align-items: center; padding: 0 12px 1px 10px; }
.fwd { margin-left: 9px; }
.hist { border-top-color: #666; border-width: 4px 4px 0; margin: 0 13px 0 10px; }
.up { margin-right: 9px; }
.crumbs { flex: 1; height: 22px; border: 1px solid #d9d9d9; display: flex; align-items: center; padding-left: 2px; }
.arr { border: 4px solid transparent; border-left-color: #6d6d6d; border-right: 0; margin: 0 9px 0 8px; }
.a2 { margin: 0 9px 0 10px; }
.chev { margin: 0 5px 0 auto; }
.refresh { width: 25px; height: 20px; border-left: 1px solid #d9d9d9; display: flex; align-items: center; justify-content: center; }
.search { width: 136px; height: 22px; margin-left: 12px; border: 1px solid #d9d9d9; display: flex; justify-content: space-between; align-items: center; padding: 0 8px; color: #6d6d6d; }

.content { flex: 1; display: flex; }
.tree { width: 216px; padding-top: 9px; border-right: 1px solid #f2f2f2; }
.node { height: 21px; display: flex; align-items: center; gap: 5px; padding-left: 30px; }
.node svg, .row svg { width: 16px; height: 16px; }
.root { padding-left: 20px; }
.gap { margin-top: 21px; }
.sel { background: #f5f5f5; border: 1px solid #dadada; border-left: 0; margin-right: 1px; }
.files { width: 593px; padding-left: 15px; }
.head { height: 31px; display: grid; grid-template-columns: 258px 120px 120px 80px; color: #4c607a; }
.head span { height: 22px; line-height: 25px; padding-left: 6px; border-right: 1px solid #e3ebf3; }
.head span:first-child { padding-left: 3px; }
.sorted { position: relative; }
.sorted::after { content: ""; position: absolute; left: 55px; top: 1px; border: 4px solid transparent; border-top-color: #6fa9cc; border-bottom: 0; }
.row { height: 21px; width: 574px; display: grid; grid-template-columns: 16px 244px 120px 100px 86px; align-items: center; padding-left: 4px; color: #6d6d6d; white-space: nowrap; }
.row b { font-weight: 400; color: #000; padding-left: 4px; }
.row time { letter-spacing: -.42px; }
.row em { font-style: normal; text-align: right; letter-spacing: -.2px; }
.selected, .hover { height: 22px; margin-bottom: -1px; padding: 0 0 1px 3px; border: 1px solid #66a7e8; background: #d1e8ff; }
.hover { border-color: #70c0e7; background: #e5f3fb; }
.status { height: 25px; display: flex; align-items: center; color: #1e395b; padding-left: 14px; }
.status span { padding-right: 10px; border-right: 1px solid #eee; margin-right: 11px; line-height: 11px; }

.tooltip { position: absolute; left: 448px; top: 675px; width: 184px; height: 50px; padding: 1px 5px; background: #fff; border: 1px solid #767676; box-shadow: 3px 3px 2px rgba(0,0,0,.5); color: #575757; white-space: nowrap; letter-spacing: -.26px; }
.note { position: absolute; left: 1231px; top: 527px; font: 30.5px/40px Lato, sans-serif; letter-spacing: 0; font-variant-ligatures: none; color: #111; white-space: nowrap; }
.dock { position: absolute; left: 504px; top: 1030px; display: flex; letter-spacing: 0; }
.dock svg { width: 48px; height: 48px; }
.dock .tile { background: #000; border-left: 1px solid #666; border-top: 1px solid #666; }
.dock .site { overflow: visible; }
.dock .mini { width: 14px; height: 12px; margin: 31px 0 0 2px; }
.t { font: 700 16px "Open Sans", sans-serif; text-anchor: middle; fill: #000; }
.w { font-size: 14px; }
.ps { fill: #fff; font-size: 18px; font-weight: 600; }
.c { fill: #fff; font-size: 22px; }
.b { fill: #fff; font-size: 20px; }
.gazi { fill: #4d74c9; font: italic 700 22px "Liberation Serif", serif; }
```
